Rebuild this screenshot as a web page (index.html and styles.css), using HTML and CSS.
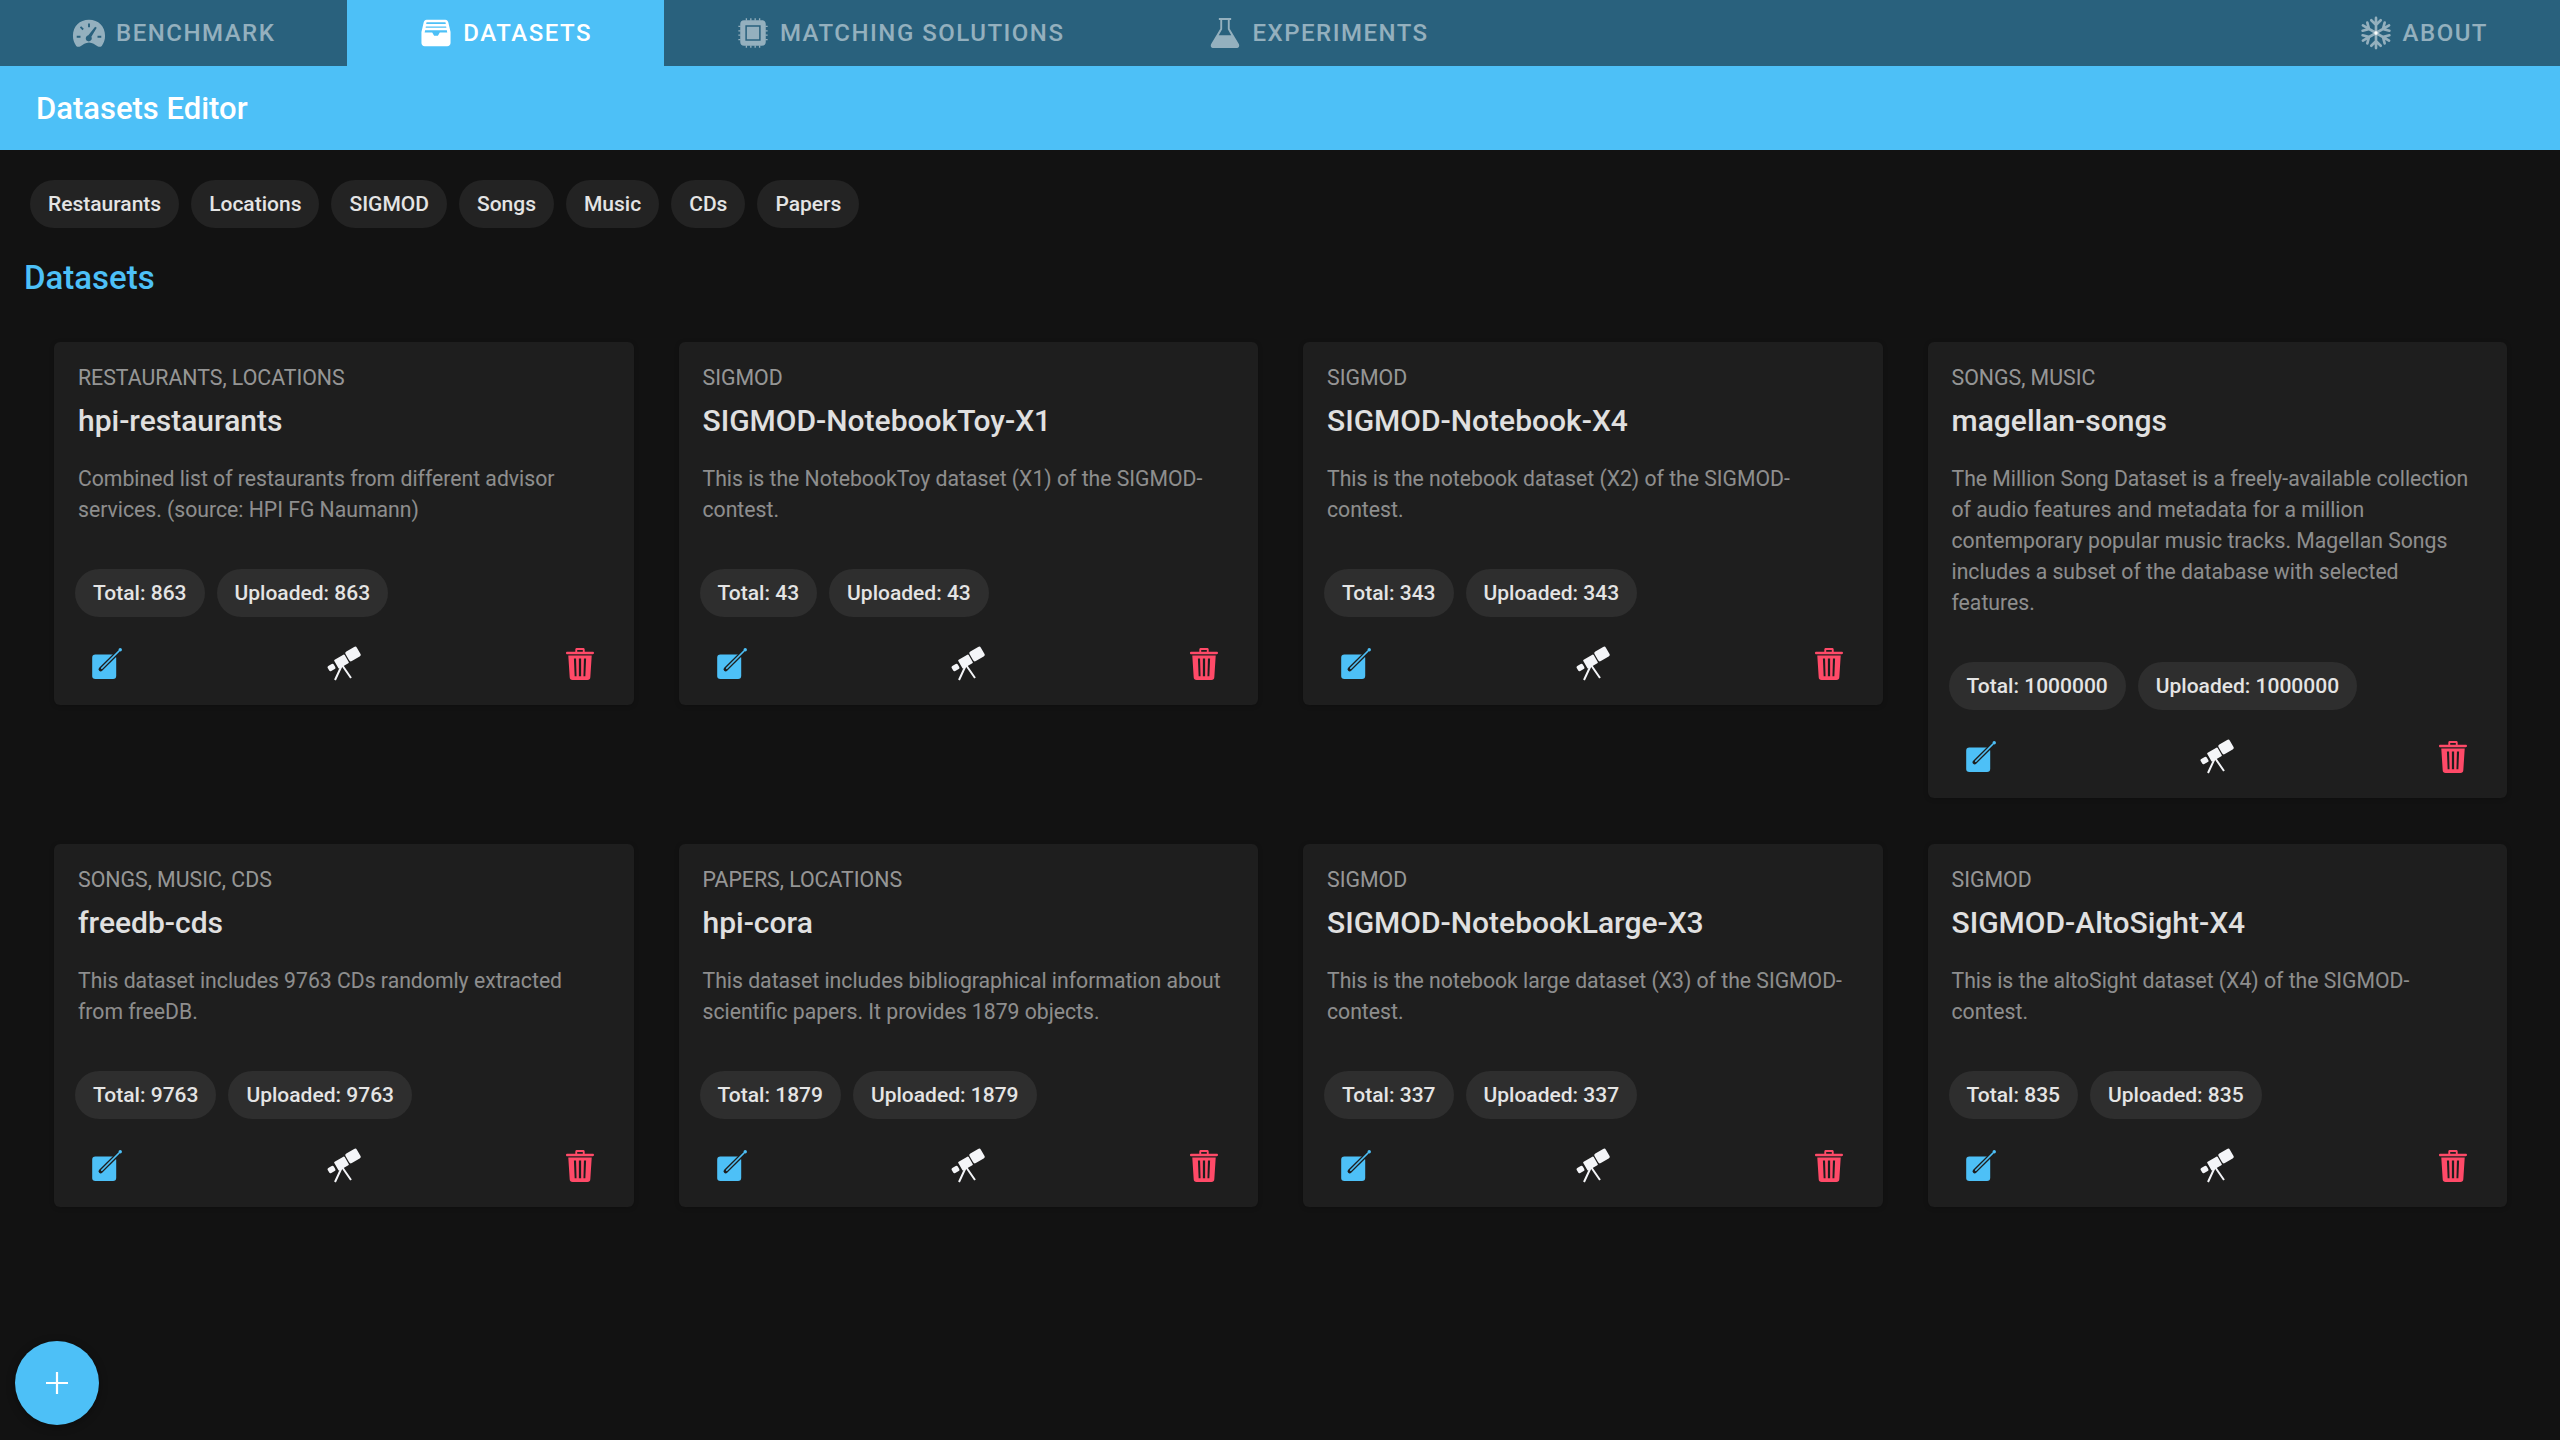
FILE: index.html
```html
<!DOCTYPE html>
<html lang="en">
<head>
  <meta charset="UTF-8" />
  <title>Datasets Editor</title>
  <link rel="stylesheet" href="styles.css">
</head>
<body>
  <svg class="sprites" xmlns="http://www.w3.org/2000/svg">
    <symbol id="i-gauge" viewBox="0 0 36 36">
      <path fill-rule="evenodd" d="M18 4C8 4 1 11 1 21c0 4 1 7 3 10 1 2 3 2 5 1 3-1.500 5-4 9-4s6 2.500 9 4c2 1 4 1 5-1 2-3 3-6 3-10C35 11 28 4 18 4zM17 8h2v4h-2zM8.300 12.200l1.400-1.400 2.800 2.800-1.400 1.400zM5 21h4v2H5zM27 21h4v2h-4zM24.500 11.500l1.700 1-5.700 9.500a3.200 3.200 0 1 1-3.200-1.500z"/>
    </symbol>
    <symbol id="i-inbox" viewBox="0 0 36 36">
      <path fill-rule="evenodd" d="M8 4h20c1.500 0 2.500 1 3 2.500L33.400 17v11.500c0 2-1.500 3.500-3.500 3.500H6c-2 0-3.400-1.500-3.400-3.500V17L5 6.500C5.500 5 6.500 4 8 4zM8 6.500h20l.4 2H7.600zM7.300 11h21.400l.3 1.500H7zM6.500 15h23l.4 2.400H22l-2 3.600h-4l-2-3.600H6z"/>
    </symbol>
    <symbol id="i-chip" viewBox="0 0 36 36">
      <path fill-rule="evenodd" d="M8.500 4.500h19c2.500 0 4 1.500 4 4v19c0 2.500-1.500 4-4 4h-19c-2.500 0-4-1.500-4-4v-19c0-2.500 1.500-4 4-4zM9.900 9.900v16.200h16.200V9.900zM11.500 11.500h13v13h-13z"/>
      <path fill="none" stroke="currentColor" stroke-width="1.400" d="M11 2.500v2M15.700 2.500v2M20.300 2.500v2M25 2.500v2M11 31.500v2M15.700 31.500v2M20.300 31.500v2M25 31.500v2M2.500 11h2M2.500 15.700h2M2.500 20.300h2M2.500 25h2M31.500 11h2M31.500 15.700h2M31.500 20.300h2M31.500 25h2"/>
    </symbol>
    <symbol id="i-flask" viewBox="0 0 36 36">
      <path fill-rule="evenodd" d="M11.500 2h13v2.200H23v9.300l9.500 16c1.200 2.200.5 4.500-2.500 4.500H6c-3 0-3.700-2.300-2.500-4.500l9.500-16V4.200h-1.500zM15 4.200V14l-3.600 6.300h13.200L21 14V4.200z"/>
    </symbol>
    <symbol id="i-snow" viewBox="0 0 36 36">
      <g fill="none" stroke="currentColor" stroke-width="2.800" stroke-linecap="round">
        <path id="snow-arm" d="M18 18V2M13 4.500l5 5 5-5"/>
        <use href="#snow-arm" transform="rotate(60 18 18)"/>
        <use href="#snow-arm" transform="rotate(120 18 18)"/>
        <use href="#snow-arm" transform="rotate(180 18 18)"/>
        <use href="#snow-arm" transform="rotate(240 18 18)"/>
        <use href="#snow-arm" transform="rotate(300 18 18)"/>
      </g>
    </symbol>
    <symbol id="i-edit" viewBox="0 0 32 32">
      <rect x="3" y="7" width="22.600" height="23" rx="3"/>
      <path fill="none" stroke="#1e1e1e" stroke-width="4" stroke-linecap="round" d="M11 21 25 7"/>
      <path fill="none" stroke="currentColor" stroke-width="1.600" stroke-linecap="round" d="M12 20 28 4"/>
      <circle cx="29.400" cy="2.600" r="1.600"/>
    </symbol>
    <symbol id="i-scope" viewBox="0 0 36 36">
      <path fill="none" stroke="currentColor" stroke-width="2" d="M16 19 9 34M16 19l9 13"/>
      <rect x="-6.500" y="-5.500" width="13" height="11" rx="2" transform="translate(27 8) rotate(-30)"/>
      <rect x="-6" y="-5" width="12" height="10" rx="1" transform="translate(15.500 15.500) rotate(-30)"/>
      <rect x="-3.500" y="-3" width="7" height="6" rx="1.500" transform="translate(5.500 21.500) rotate(-30)"/>
    </symbol>
    <symbol id="i-trash" viewBox="0 0 32 36">
      <path fill-rule="evenodd" d="M11 2.500C11 1.500 12 1 13 1h6c1 0 2 .5 2 1.500V5h8.500c.8 0 1.500.5 1.500 1.200s-.7 1.300-1.500 1.300H2.500C1.700 7.500 1 7 1 6.200S1.700 5 2.500 5H11zm2 .5v2h6V3zM3.500 9h25L27 32c-.1 1.800-1.200 3-3 3H8c-1.800 0-2.900-1.200-3-3zm6 3 .8 19h2l-.5-19zm5.300 0v19h2.400V12zm5.400 0-.5 19h2l.8-19z"/>
    </symbol>
  </svg>

  <nav class="tabs">
    <a class="tab"><svg class="tab-icon"><use href="#i-gauge"/></svg>Benchmark</a>
    <a class="tab active"><svg class="tab-icon"><use href="#i-inbox"/></svg>Datasets</a>
    <a class="tab"><svg class="tab-icon"><use href="#i-chip"/></svg>Matching Solutions</a>
    <a class="tab"><svg class="tab-icon"><use href="#i-flask"/></svg>Experiments</a>
    <a class="tab tab-about"><svg class="tab-icon"><use href="#i-snow"/></svg>About</a>
  </nav>

  <header class="toolbar">Datasets Editor</header>

  <main class="content">
    <div class="filters">
      <span class="chip">Restaurants</span>
      <span class="chip">Locations</span>
      <span class="chip">SIGMOD</span>
      <span class="chip">Songs</span>
      <span class="chip">Music</span>
      <span class="chip">CDs</span>
      <span class="chip">Papers</span>
    </div>

    <h2 class="section-title">Datasets</h2>

    <div class="grid" id="grid"></div>
  </main>

  <button class="fab" aria-label="Add dataset">
    <svg viewBox="0 0 24 24"><path d="M12 1v22M1 12h22"/></svg>
  </button>

  <script>
    const datasets = [
      { tags: "Restaurants, Locations", name: "hpi-restaurants", desc: "Combined list of restaurants from different advisor services. (source: HPI FG Naumann)", total: 863 },
      { tags: "SIGMOD", name: "SIGMOD-NotebookToy-X1", desc: "This is the NotebookToy dataset (X1) of the SIGMOD-contest.", total: 43 },
      { tags: "SIGMOD", name: "SIGMOD-Notebook-X4", desc: "This is the notebook dataset (X2) of the SIGMOD-contest.", total: 343 },
      { tags: "Songs, Music", name: "magellan-songs", desc: "The Million Song Dataset is a freely-available collection of audio features and metadata for a million contemporary popular music tracks. Magellan Songs includes a subset of the database with selected features.", total: 1000000 },
      { tags: "Songs, Music, CDs", name: "freedb-cds", desc: "This dataset includes 9763 CDs randomly extracted from freeDB.", total: 9763 },
      { tags: "Papers, Locations", name: "hpi-cora", desc: "This dataset includes bibliographical information about scientific papers. It provides 1879 objects.", total: 1879 },
      { tags: "SIGMOD", name: "SIGMOD-NotebookLarge-X3", desc: "This is the notebook large dataset (X3) of the SIGMOD-contest.", total: 337 },
      { tags: "SIGMOD", name: "SIGMOD-AltoSight-X4", desc: "This is the altoSight dataset (X4) of the SIGMOD-contest.", total: 835 }
    ];

    document.getElementById("grid").innerHTML = datasets.map(d => `
      <article class="card">
        <div class="card-tags">${d.tags}</div>
        <h3 class="card-name">${d.name}</h3>
        <p class="card-desc">${d.desc}</p>
        <div class="card-chips">
          <span class="chip chip-light">Total: ${d.total}</span>
          <span class="chip chip-light">Uploaded: ${d.total}</span>
        </div>
        <div class="card-actions">
          <svg class="action action-edit"><use href="#i-edit"/></svg>
          <svg class="action action-scope"><use href="#i-scope"/></svg>
          <svg class="action action-trash"><use href="#i-trash"/></svg>
        </div>
      </article>`).join("");
  </script>
</body>
</html>
```

FILE: styles.css
```css
* {
  box-sizing: border-box;
}

body {
  margin: 0;
  min-height: 100vh;
  background: #121212;
  color: #fff;
  font-family: Roboto, "Liberation Sans", sans-serif;
  font-size: 21px;
}

.sprites {
  display: none;
}

.tabs {
  display: flex;
  height: 66px;
  background: #29617d;
}

.tab {
  display: flex;
  align-items: center;
  gap: 10px;
  height: 66px;
  padding: 0 72px;
  color: rgba(255, 255, 255, 0.5);
  font-size: 24px;
  font-weight: 500;
  letter-spacing: 1.5px;
  text-transform: uppercase;
}

.tab-about {
  margin-left: auto;
}

.tab.active {
  background: #4dc0f7;
  color: #fff;
}

.tab-icon {
  width: 34px;
  height: 34px;
  fill: currentColor;
}

.toolbar {
  display: flex;
  align-items: center;
  height: 84px;
  padding: 0 36px;
  background: #4dc0f7;
  font-size: 31px;
  font-weight: 500;
}

.content {
  padding: 30px 53px 0 24px;
}

.filters {
  display: flex;
  gap: 12px;
  padding-left: 6px;
}

.chip {
  display: inline-flex;
  align-items: center;
  height: 48px;
  padding: 0 18px;
  border-radius: 24px;
  background: #232323;
  color: #e4e4e4;
  font-size: 21px;
  font-weight: 500;
}

.chip-light {
  background: #2e2e2e;
}

.section-title {
  margin: 27px 0 0;
  color: #4dc0f7;
  font-size: 33px;
  font-weight: 500;
  line-height: 46px;
}

.grid {
  display: grid;
  grid-template-columns: repeat(4, 1fr);
  gap: 46px 45px;
  align-items: start;
  margin: 41px 0 0 30px;
}

.card {
  padding: 24px 24px 0;
  border-radius: 6px;
  background: #1e1e1e;
  box-shadow: 0 1px 5px rgba(0, 0, 0, 0.2);
}

.card-tags {
  color: rgba(255, 255, 255, 0.55);
  font-size: 21.3px;
  line-height: 24px;
  text-transform: uppercase;
}

.card-name {
  margin: 10px 0 0;
  color: #e0e0e0;
  font-size: 30px;
  font-weight: 500;
  line-height: 41px;
}

.card-desc {
  margin: 22px 0 0;
  color: rgba(255, 255, 255, 0.5);
  font-size: 21.2px;
  line-height: 31px;
}

.card-chips {
  display: flex;
  gap: 12px;
  margin: 44px 0 0 -3px;
}

.card-actions {
  display: flex;
  align-items: center;
  justify-content: space-between;
  height: 88px;
  padding: 6px 15px 0 11px;
}

.action {
  height: 34px;
  fill: currentColor;
}

.action-edit {
  width: 34px;
  color: #4dc0f7;
}

.action-scope {
  width: 36px;
  height: 36px;
  color: #f4f5f8;
}

.action-trash {
  width: 30px;
  color: #ff4a68;
}

.fab {
  position: fixed;
  left: 15px;
  bottom: 15px;
  display: flex;
  align-items: center;
  justify-content: center;
  width: 84px;
  height: 84px;
  padding: 0;
  border: none;
  border-radius: 50%;
  background: #4dc0f7;
  box-shadow: 0 2px 8px rgba(0, 0, 0, 0.35);
}

.fab svg {
  width: 24px;
  height: 24px;
  fill: none;
  stroke: #fff;
  stroke-width: 2.2;
}
```
